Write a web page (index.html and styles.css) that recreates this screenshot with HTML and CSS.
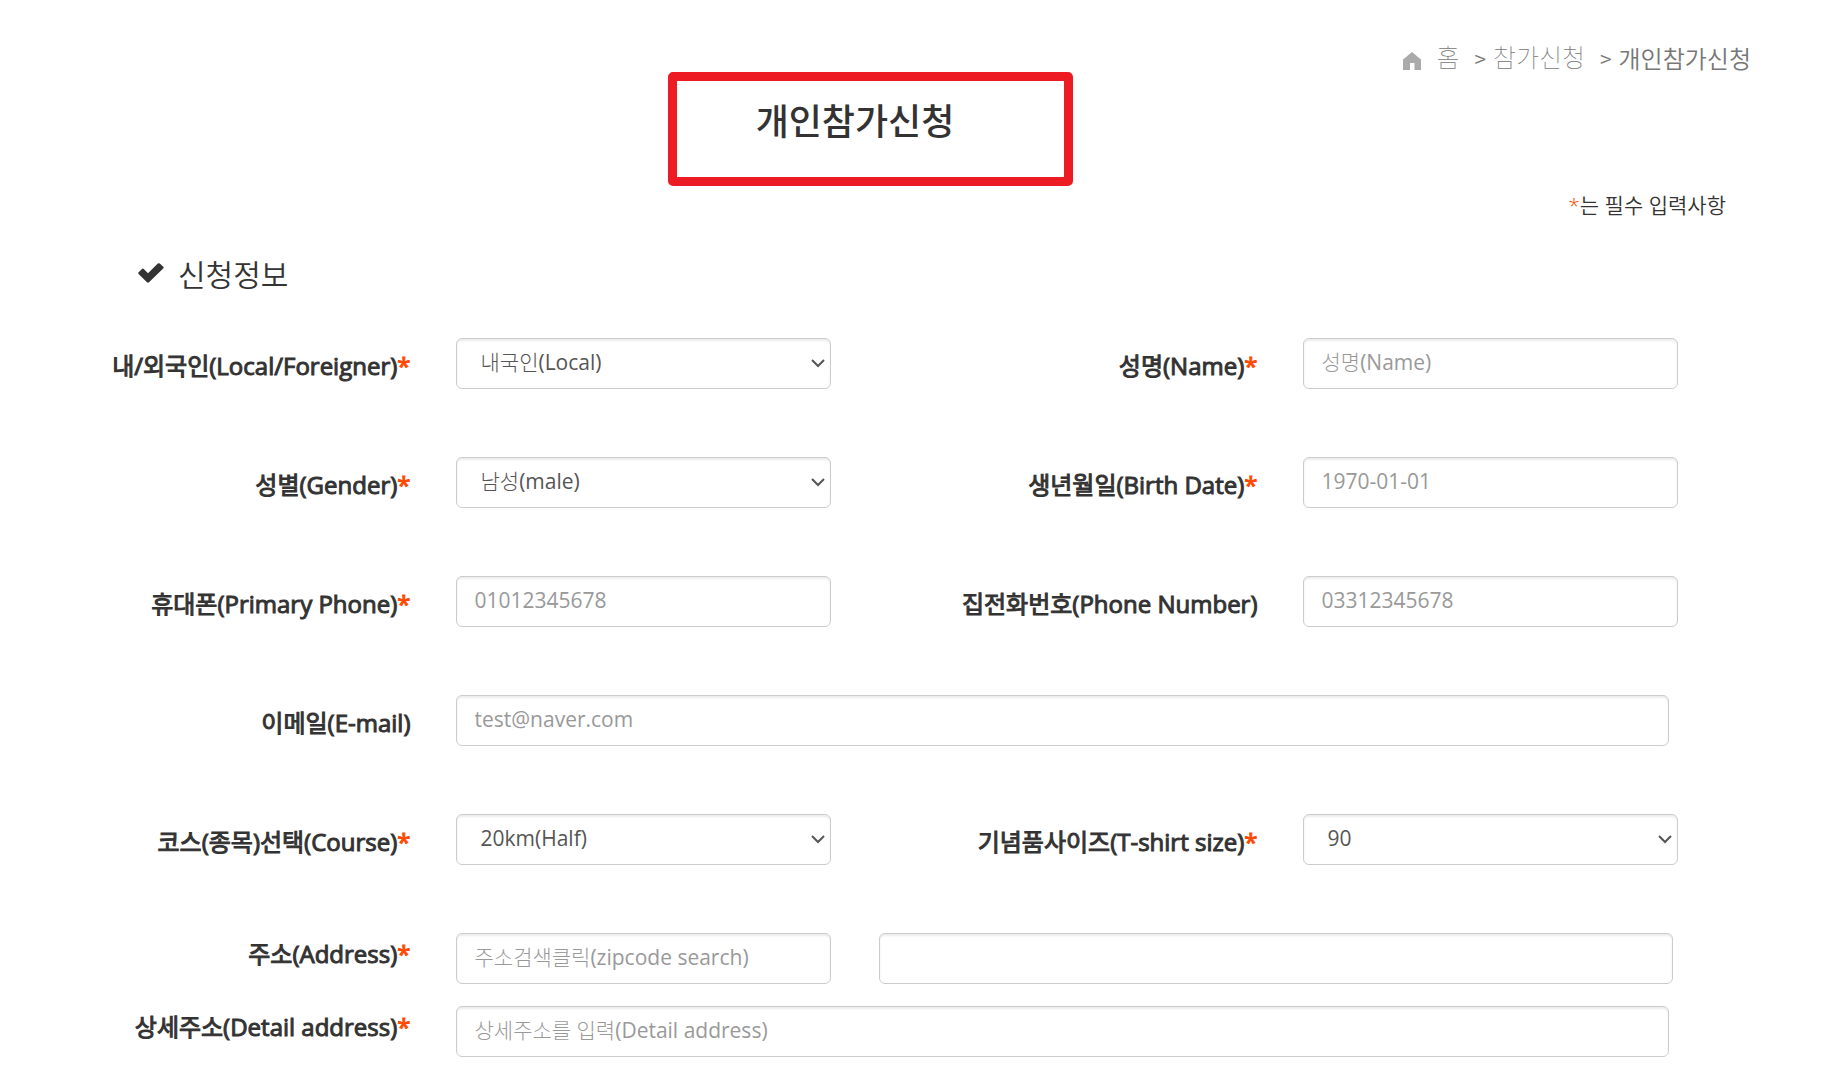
FILE: index.html
```
<!DOCTYPE html>
<html lang="ko">
<head>
    <meta charset="UTF-8">
    <meta name="viewport" content="width=device-width, initial-scale=1.0">
    <title>개인참가신청</title>
    <link rel="stylesheet" href="styles.css">
</head>
<body>
    <nav class="breadcrumb">
        <svg class="home" viewBox="0 0 18 18" aria-hidden="true">
            <path d="M9 0L18 7.500V18H11.500V11H7V18H0V7.500Z" fill="#aaa"/>
        </svg>
        <a href="#" class="crumb">홈</a>
        <span class="sep">&gt;</span>
        <a href="#" class="crumb">참가신청</a>
        <span class="sep">&gt;</span>
        <span class="current">개인참가신청</span>
    </nav>
    <main class="container">
        <div class="title-row">
            <h1 class="title">개인참가신청<span class="mark"></span></h1>
        </div>
        <p class="notice"><span class="req">*</span>는 필수 입력사항</p>
        <h2 class="section-title">
            <svg class="check" viewBox="0 0 26 20" aria-hidden="true">
                <path d="M0.600 9.200L4.200 5.800Q5 5.200 5.800 5.900L10 10.200L19.800 0.600Q20.800 -0.200 21.800 0.600L25.300 3.800Q26 4.600 25.200 5.400L11 19.300Q10 20.200 9 19.300L0.600 10.900Q-0.200 10 0.600 9.200Z" fill="#333"/>
            </svg>
            신청정보
        </h2>
        <form class="form">
            <label for="local">내/외국인(Local/Foreigner)<span class="req">*</span></label>
            <div class="field">
                <select id="local" class="control">
                    <option>내국인(Local)</option>
                    <option>외국인(Foreigner)</option>
                </select>
            </div>
            <label for="name">성명(Name)<span class="req">*</span></label>
            <div class="field">
                <input id="name" type="text" class="control" placeholder="성명(Name)">
            </div>

            <label for="gender">성별(Gender)<span class="req">*</span></label>
            <div class="field">
                <select id="gender" class="control">
                    <option>남성(male)</option>
                    <option>여성(female)</option>
                </select>
            </div>
            <label for="birth">생년월일(Birth Date)<span class="req">*</span></label>
            <div class="field">
                <input id="birth" type="text" class="control" placeholder="1970-01-01">
            </div>

            <label for="phone">휴대폰(Primary Phone)<span class="req">*</span></label>
            <div class="field">
                <input id="phone" type="tel" class="control" placeholder="01012345678">
            </div>
            <label for="tel">집전화번호(Phone Number)</label>
            <div class="field">
                <input id="tel" type="tel" class="control" placeholder="03312345678">
            </div>

            <label for="email">이메일(E-mail)</label>
            <div class="field wide">
                <input id="email" type="email" class="control" placeholder="test@naver.com">
            </div>

            <label for="course">코스(종목)선택(Course)<span class="req">*</span></label>
            <div class="field">
                <select id="course" class="control">
                    <option>20km(Half)</option>
                    <option>10km</option>
                </select>
            </div>
            <label for="size">기념품사이즈(T-shirt size)<span class="req">*</span></label>
            <div class="field">
                <select id="size" class="control">
                    <option>90</option>
                    <option>95</option>
                    <option>100</option>
                </select>
            </div>

            <label for="zipcode" class="address">주소(Address)<span class="req">*</span></label>
            <div class="field">
                <input id="zipcode" type="text" class="control" placeholder="주소검색클릭(zipcode search)">
            </div>
            <div class="field half">
                <input id="address" type="text" class="control" aria-label="주소(Address)">
            </div>

            <label for="detail" class="address tight">상세주소(Detail address)<span class="req">*</span></label>
            <div class="field wide tight">
                <input id="detail" type="text" class="control" placeholder="상세주소를 입력(Detail address)">
            </div>
        </form>
    </main>
</body>
</html>
```

FILE: styles.css
```
*{
    box-sizing: border-box;
}

body{
    margin: 0;
    background: #fff;
    color: #333;
    font-family: 'Open Sans', 'Noto Sans CJK KR', sans-serif;
    font-size: 21px;
    line-height: 30px;
}

.breadcrumb{
    display: flex;
    align-items: center;
    justify-content: flex-end;
    height: 36px;
    margin-top: 40px;
    padding-right: 82px;
    color: #777;
    font-family: 'Noto Sans CJK KR', sans-serif;
    font-size: 24px;
    font-weight: 350;
}

.home{
    width: 18px;
    height: 18px;
    margin: 6px 15px 0 0;
}

.crumb{
    padding-bottom: 4px;
    color: #777;
    font-size: 25px;
    font-weight: 100;
    text-decoration: none;
}

.sep{
    margin: 0 7px 0 15px;
    font-size: 21px;
}

.container{
    padding: 0 131px 0 8px;
}

.title-row{
    text-align: center;
}

.title{
    position: relative;
    display: inline-block;
    margin: 16px 0 0;
    font-family: 'Noto Sans CJK KR', sans-serif;
    font-size: 36px;
    font-weight: 500;
    line-height: 54px;
}

/* red frame around the page title */
.mark{
    position: absolute;
    top: -20px;
    left: -88px;
    width: 405px;
    height: 114px;
    border: 9px solid #ed1c24;
    border-radius: 5px;
}

.notice{
    margin: 44px -24px 0 0;
    font-weight: 350;
    text-align: right;
}

.req{
    color: #ff4800;
}

.section-title{
    display: flex;
    align-items: center;
    gap: 14px;
    margin: 25px 0 0 130px;
    font-family: 'Noto Sans CJK KR', sans-serif;
    font-size: 30px;
    font-weight: 350;
    line-height: 56px;
}

.check{
    width: 26px;
    height: 20px;
}

.form{
    display: grid;
    grid-template-columns: repeat(4, 1fr);
    row-gap: 68px;
    margin-top: 37px;
}

label{
    padding: 13px 21px 0 0;
    font-size: 24px;
    text-align: right;
    white-space: nowrap;
    -webkit-text-stroke: 1px;
}

.address{
    padding-top: 6px;
}

.field{
    padding: 0 24px;
}

.wide{
    grid-column: span 3;
    padding-right: 33px;
}

.half{
    grid-column: span 2;
    padding-right: 29px;
}

.tight{
    margin-top: -46px;
}

.control{
    display: block;
    width: 100%;
    height: 51px;
    padding: 0 18px 3px;
    border: 1px solid #ccc;
    border-radius: 6px;
    background: #fff;
    box-shadow: inset 0 2px 2px rgba(0, 0, 0, 0.075);
    color: #555;
    font-family: 'Open Sans', 'Noto Sans CJK KR Light', 'Noto Sans CJK KR', sans-serif;
    font-size: 21px;
}

select.control{
    appearance: none;
    padding-left: 24px;
    background: #fff url("data:image/svg+xml,%3Csvg xmlns='http://www.w3.org/2000/svg' width='14' height='9' fill='none' stroke='%23555' stroke-width='2'%3E%3Cpath d='M1 1l6 6 6-6'/%3E%3C/svg%3E") no-repeat right 5px center;
}

.control::placeholder{
    color: #999;
    opacity: 1;
}
```
